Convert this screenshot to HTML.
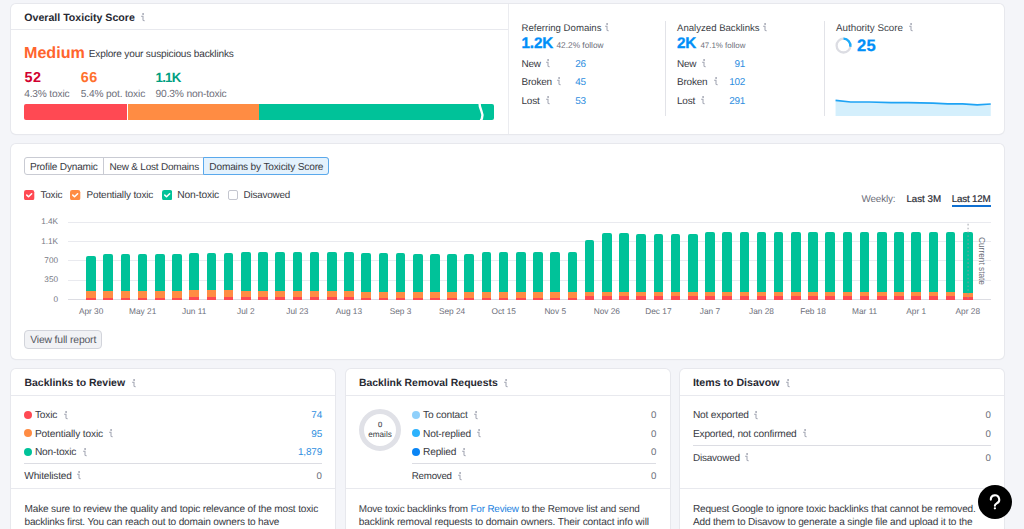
<!DOCTYPE html>
<html><head><meta charset="utf-8"><style>
html,body{margin:0;padding:0;}
body{width:1024px;height:529px;overflow:hidden;background:#f4f5f9;position:relative;font-family:"Liberation Sans", sans-serif;}
.t{position:absolute;white-space:pre;font-family:"Liberation Sans", sans-serif;text-rendering:geometricPrecision;}
</style></head><body>
<div style="position:absolute;left:11px;top:4px;width:993px;height:129.6px;background:#fff;border-radius:5px;box-shadow:0 0 0 1px #e7e8ed, 0 1px 1.5px rgba(30,35,60,0.06);"></div>
<div style="position:absolute;left:11.00px;top:29.00px;width:497.00px;height:1.00px;background:#e8e9ee;"></div>
<div style="position:absolute;left:508.00px;top:4.00px;width:1.00px;height:129.60px;background:#ebecf0;"></div>
<div class="t" style="left:24.30px;top:13.01px;font-size:10.6px;line-height:10.6px;font-weight:700;color:#272932;">Overall Toxicity Score</div>
<svg style="position:absolute;left:140.00px;top:12.80px" width="7" height="10" viewBox="0 0 7 10"><circle cx="3.1" cy="1.0" r="0.95" fill="#a3a6b3"/><path d="M1.1 3.3 H3.0 V6.9 Q3.0 7.7 4.7 7.7" stroke="#a3a6b3" stroke-width="1.05" fill="none"/></svg>
<div class="t" style="left:24.00px;top:44.50px;font-size:16.1px;line-height:16.1px;font-weight:700;color:#ff642d;">Medium</div>
<div class="t" style="left:88.80px;top:50.31px;font-size:10.09px;line-height:9.7px;font-weight:400;color:#383a43;letter-spacing:-0.177px;">Explore your suspicious backlinks</div>
<div class="t" style="left:24.50px;top:70.51px;font-size:14.4px;line-height:14.4px;font-weight:700;color:#d1002f;letter-spacing:0.4px;">52</div>
<div class="t" style="left:80.80px;top:70.51px;font-size:14.4px;line-height:14.4px;font-weight:700;color:#ff6f2c;letter-spacing:0.4px;">66</div>
<div class="t" style="left:155.60px;top:70.51px;font-size:13.3px;line-height:13.3px;font-weight:700;color:#009f81;letter-spacing:-0.8px;">1.1K</div>
<div class="t" style="left:24.20px;top:89.80px;font-size:10.19px;line-height:9.8px;font-weight:400;color:#6c6e79;letter-spacing:-0.173px;">4.3% toxic</div>
<div class="t" style="left:80.80px;top:89.80px;font-size:10.19px;line-height:9.8px;font-weight:400;color:#6c6e79;letter-spacing:-0.164px;">5.4% pot. toxic</div>
<div class="t" style="left:155.60px;top:89.81px;font-size:10.3px;line-height:9.9px;font-weight:400;color:#6c6e79;letter-spacing:-0.201px;">90.3% non-toxic</div>
<div style="position:absolute;left:24.00px;top:103.50px;width:103.30px;height:16.70px;background:#ff4953;border-radius:2px 0 0 2px;"></div>
<div style="position:absolute;left:128.10px;top:103.50px;width:130.70px;height:16.70px;background:#ff8c43;"></div>
<div style="position:absolute;left:259.30px;top:103.50px;width:234.50px;height:16.70px;background:#00c299;border-radius:0 2px 2px 0;"></div>
<svg style="position:absolute;left:472px;top:99px" width="16" height="26" viewBox="0 0 16 26"><path d="M7.3 1.8 C7.4 6 7.9 9 9.4 12 C10.6 14.5 10.8 17 9.9 19.5 C9.2 21.2 8.3 22.6 7.2 23.8" stroke="#fff" stroke-width="2.4" fill="none"/></svg>
<div class="t" style="left:521.50px;top:23.80px;font-size:9.6px;line-height:9.6px;font-weight:400;color:#3d3f48;">Referring Domains</div>
<svg style="position:absolute;left:603.50px;top:22.80px" width="7" height="10" viewBox="0 0 7 10"><circle cx="3.1" cy="1.0" r="0.95" fill="#a3a6b3"/><path d="M1.1 3.3 H3.0 V6.9 Q3.0 7.7 4.7 7.7" stroke="#a3a6b3" stroke-width="1.05" fill="none"/></svg>
<div class="t" style="left:521.50px;top:36.00px;font-size:15.2px;line-height:15.2px;font-weight:700;color:#008ff8;letter-spacing:-0.1px;-webkit-text-stroke:0.35px #008ff8;">1.2K</div>
<div class="t" style="left:556.50px;top:40.81px;font-size:8.3px;line-height:8.3px;font-weight:400;color:#6c6e79;">42.2% follow</div>
<div class="t" style="left:521.50px;top:60.01px;font-size:9.98px;line-height:9.6px;font-weight:400;color:#383a43;letter-spacing:-0.250px;">New</div>
<svg style="position:absolute;left:544.50px;top:59.00px" width="7" height="10" viewBox="0 0 7 10"><circle cx="3.1" cy="1.0" r="0.95" fill="#a3a6b3"/><path d="M1.1 3.3 H3.0 V6.9 Q3.0 7.7 4.7 7.7" stroke="#a3a6b3" stroke-width="1.05" fill="none"/></svg>
<div class="t" style="right:438.20px;top:60.01px;font-size:9.98px;line-height:9.6px;font-weight:400;color:#2d8ee0;letter-spacing:-0.211px;">26</div>
<div class="t" style="left:521.50px;top:78.40px;font-size:9.98px;line-height:9.6px;font-weight:400;color:#383a43;letter-spacing:-0.198px;">Broken</div>
<svg style="position:absolute;left:556.00px;top:77.40px" width="7" height="10" viewBox="0 0 7 10"><circle cx="3.1" cy="1.0" r="0.95" fill="#a3a6b3"/><path d="M1.1 3.3 H3.0 V6.9 Q3.0 7.7 4.7 7.7" stroke="#a3a6b3" stroke-width="1.05" fill="none"/></svg>
<div class="t" style="right:438.20px;top:78.40px;font-size:9.98px;line-height:9.6px;font-weight:400;color:#2d8ee0;letter-spacing:-0.211px;">45</div>
<div class="t" style="left:521.50px;top:96.71px;font-size:9.98px;line-height:9.6px;font-weight:400;color:#383a43;letter-spacing:-0.176px;">Lost</div>
<svg style="position:absolute;left:544.50px;top:95.70px" width="7" height="10" viewBox="0 0 7 10"><circle cx="3.1" cy="1.0" r="0.95" fill="#a3a6b3"/><path d="M1.1 3.3 H3.0 V6.9 Q3.0 7.7 4.7 7.7" stroke="#a3a6b3" stroke-width="1.05" fill="none"/></svg>
<div class="t" style="right:438.20px;top:96.71px;font-size:9.98px;line-height:9.6px;font-weight:400;color:#2d8ee0;letter-spacing:-0.211px;">53</div>
<div class="t" style="left:677.00px;top:23.80px;font-size:9.6px;line-height:9.6px;font-weight:400;color:#3d3f48;">Analyzed Backlinks</div>
<svg style="position:absolute;left:762.00px;top:22.80px" width="7" height="10" viewBox="0 0 7 10"><circle cx="3.1" cy="1.0" r="0.95" fill="#a3a6b3"/><path d="M1.1 3.3 H3.0 V6.9 Q3.0 7.7 4.7 7.7" stroke="#a3a6b3" stroke-width="1.05" fill="none"/></svg>
<div class="t" style="left:677.00px;top:36.00px;font-size:15.2px;line-height:15.2px;font-weight:700;color:#008ff8;letter-spacing:-0.1px;-webkit-text-stroke:0.35px #008ff8;">2K</div>
<div class="t" style="left:700.40px;top:41.81px;font-size:7.95px;line-height:7.95px;font-weight:400;color:#6c6e79;">47.1% follow</div>
<div class="t" style="left:677.00px;top:60.01px;font-size:9.98px;line-height:9.6px;font-weight:400;color:#383a43;letter-spacing:-0.250px;">New</div>
<svg style="position:absolute;left:701.00px;top:59.00px" width="7" height="10" viewBox="0 0 7 10"><circle cx="3.1" cy="1.0" r="0.95" fill="#a3a6b3"/><path d="M1.1 3.3 H3.0 V6.9 Q3.0 7.7 4.7 7.7" stroke="#a3a6b3" stroke-width="1.05" fill="none"/></svg>
<div class="t" style="right:278.80px;top:60.01px;font-size:9.98px;line-height:9.6px;font-weight:400;color:#2d8ee0;letter-spacing:-0.211px;">91</div>
<div class="t" style="left:677.00px;top:78.40px;font-size:9.98px;line-height:9.6px;font-weight:400;color:#383a43;letter-spacing:-0.198px;">Broken</div>
<svg style="position:absolute;left:712.50px;top:77.40px" width="7" height="10" viewBox="0 0 7 10"><circle cx="3.1" cy="1.0" r="0.95" fill="#a3a6b3"/><path d="M1.1 3.3 H3.0 V6.9 Q3.0 7.7 4.7 7.7" stroke="#a3a6b3" stroke-width="1.05" fill="none"/></svg>
<div class="t" style="right:278.80px;top:78.40px;font-size:9.98px;line-height:9.6px;font-weight:400;color:#2d8ee0;letter-spacing:-0.208px;">102</div>
<div class="t" style="left:677.00px;top:96.71px;font-size:9.98px;line-height:9.6px;font-weight:400;color:#383a43;letter-spacing:-0.176px;">Lost</div>
<svg style="position:absolute;left:700.00px;top:95.70px" width="7" height="10" viewBox="0 0 7 10"><circle cx="3.1" cy="1.0" r="0.95" fill="#a3a6b3"/><path d="M1.1 3.3 H3.0 V6.9 Q3.0 7.7 4.7 7.7" stroke="#a3a6b3" stroke-width="1.05" fill="none"/></svg>
<div class="t" style="right:278.80px;top:96.71px;font-size:9.98px;line-height:9.6px;font-weight:400;color:#2d8ee0;letter-spacing:-0.208px;">291</div>
<div style="position:absolute;left:665.30px;top:21.00px;width:1.00px;height:95.00px;background:#e2e3e8;"></div>
<div style="position:absolute;left:824.00px;top:21.00px;width:1.00px;height:95.00px;background:#e2e3e8;"></div>
<div class="t" style="left:836.00px;top:23.80px;font-size:9.8px;line-height:9.8px;font-weight:400;color:#3d3f48;">Authority Score</div>
<svg style="position:absolute;left:908.00px;top:22.80px" width="7" height="10" viewBox="0 0 7 10"><circle cx="3.1" cy="1.0" r="0.95" fill="#a3a6b3"/><path d="M1.1 3.3 H3.0 V6.9 Q3.0 7.7 4.7 7.7" stroke="#a3a6b3" stroke-width="1.05" fill="none"/></svg>
<svg style="position:absolute;left:834px;top:36px" width="20" height="20" viewBox="0 0 20 20"><circle cx="9.5" cy="9.6" r="6.9" stroke="#dcdde3" stroke-width="2.3" fill="none"/><path d="M9.5 2.7 A6.9 6.9 0 0 1 16.3 10.8" stroke="#1cabfb" stroke-width="2.3" fill="none"/></svg>
<div class="t" style="left:857.00px;top:37.51px;font-size:16.5px;line-height:16.5px;font-weight:700;color:#008ff8;letter-spacing:0.35px;-webkit-text-stroke:0.3px #008ff8;">25</div>
<svg style="position:absolute;left:835px;top:98px" width="156" height="18.2" viewBox="0 0 156 18.2"><path d="M0.5 2.4 L15.7 4.0 L34.2 4.0 L56.3 4.7 L73.5 4.7 L98 5.2 L112.8 5.9 L127.5 5.9 L142.3 6.9 L155.8 6.0 L155.8 18.2 L0.5 18.2 Z" fill="#d4effc"/><path d="M0.5 2.4 L15.7 4.0 L34.2 4.0 L56.3 4.7 L73.5 4.7 L98 5.2 L112.8 5.9 L127.5 5.9 L142.3 6.9 L155.8 6.0" stroke="#1ea3f4" stroke-width="1.7" fill="none" stroke-linejoin="round"/></svg>
<div style="position:absolute;left:11px;top:143.8px;width:993px;height:215.39999999999998px;background:#fff;border-radius:5px;box-shadow:0 0 0 1px #e7e8ed, 0 1px 1.5px rgba(30,35,60,0.06);"></div>
<div style="position:absolute;left:24.4px;top:157.3px;width:304.4px;height:17.5px;box-sizing:border-box;border:1px solid #c9cbd3;border-radius:3px;background:#fff"></div>
<div style="position:absolute;left:103.20px;top:157.30px;width:1.00px;height:17.50px;background:#c9cbd3;"></div>
<div style="position:absolute;left:203.2px;top:157.3px;width:125.6px;height:17.5px;box-sizing:border-box;border:1px solid #5aa9ec;border-radius:0 3px 3px 0;background:#e4f2fd"></div>
<div class="t" style="left:29.90px;top:162.81px;font-size:10.09px;line-height:9.7px;font-weight:400;color:#383a43;letter-spacing:-0.182px;">Profile Dynamic</div>
<div class="t" style="left:109.40px;top:162.80px;font-size:9.98px;line-height:9.6px;font-weight:400;color:#383a43;letter-spacing:-0.194px;">New &amp; Lost Domains</div>
<div class="t" style="left:209.30px;top:162.81px;font-size:10.13px;line-height:9.74px;font-weight:400;color:#383a43;letter-spacing:-0.182px;">Domains by Toxicity Score</div>
<svg style="position:absolute;left:24.40px;top:189.6px" width="10.3" height="10.3" viewBox="0 0 10 10"><rect x="0" y="0" width="10" height="10" rx="2.2" fill="#ff4953"/><path d="M2.7 5.0 L4.4 6.6 L7.4 3.6" stroke="#fff" stroke-width="1.5" fill="none" stroke-linecap="round" stroke-linejoin="round"/></svg>
<div class="t" style="left:40.40px;top:190.90px;font-size:9.98px;line-height:9.6px;font-weight:400;color:#383a43;letter-spacing:-0.172px;">Toxic</div>
<svg style="position:absolute;left:70.30px;top:189.6px" width="10.3" height="10.3" viewBox="0 0 10 10"><rect x="0" y="0" width="10" height="10" rx="2.2" fill="#ff8c43"/><path d="M2.7 5.0 L4.4 6.6 L7.4 3.6" stroke="#fff" stroke-width="1.5" fill="none" stroke-linecap="round" stroke-linejoin="round"/></svg>
<div class="t" style="left:86.50px;top:190.90px;font-size:9.98px;line-height:9.6px;font-weight:400;color:#383a43;letter-spacing:-0.153px;">Potentially toxic</div>
<svg style="position:absolute;left:161.70px;top:189.6px" width="10.3" height="10.3" viewBox="0 0 10 10"><rect x="0" y="0" width="10" height="10" rx="2.2" fill="#00c299"/><path d="M2.7 5.0 L4.4 6.6 L7.4 3.6" stroke="#fff" stroke-width="1.5" fill="none" stroke-linecap="round" stroke-linejoin="round"/></svg>
<div class="t" style="left:177.30px;top:190.91px;font-size:10.3px;line-height:9.9px;font-weight:400;color:#383a43;letter-spacing:-0.198px;">Non-toxic</div>
<div style="position:absolute;left:227.50px;top:189.6px;width:10.2px;height:10.2px;box-sizing:border-box;border:1px solid #c4c6cf;border-radius:2px;background:#fff"></div>
<div class="t" style="left:243.50px;top:190.91px;font-size:9.88px;line-height:9.5px;font-weight:400;color:#383a43;letter-spacing:-0.205px;">Disavowed</div>
<div class="t" style="left:861.60px;top:194.60px;font-size:9.88px;line-height:9.5px;font-weight:400;color:#6c6e79;letter-spacing:-0.190px;">Weekly:</div>
<div class="t" style="left:906.40px;top:194.61px;font-size:9.75px;line-height:9.75px;font-weight:400;color:#2a2c35;-webkit-text-stroke:0.2px #2a2c35;letter-spacing:0px;">Last 3M</div>
<div class="t" style="left:951.70px;top:194.61px;font-size:9.75px;line-height:9.75px;font-weight:400;color:#2a2c35;-webkit-text-stroke:0.2px #2a2c35;letter-spacing:-0.15px;">Last 12M</div>
<div style="position:absolute;left:951.70px;top:205.00px;width:38.90px;height:2.00px;background:#0f6fd1;"></div>
<div style="position:absolute;left:68.40px;top:221.50px;width:922.40px;height:1.00px;background:#e9eaef;"></div>
<div class="t" style="right:966.00px;top:218.31px;font-size:8.2px;line-height:8.2px;font-weight:400;color:#767883;">1.4K</div>
<div style="position:absolute;left:68.40px;top:240.90px;width:922.40px;height:1.00px;background:#e9eaef;"></div>
<div class="t" style="right:966.00px;top:237.71px;font-size:8.2px;line-height:8.2px;font-weight:400;color:#767883;">1.1K</div>
<div style="position:absolute;left:68.40px;top:260.20px;width:922.40px;height:1.00px;background:#e9eaef;"></div>
<div class="t" style="right:966.00px;top:257.01px;font-size:8.2px;line-height:8.2px;font-weight:400;color:#767883;">700</div>
<div style="position:absolute;left:68.40px;top:279.60px;width:922.40px;height:1.00px;background:#e9eaef;"></div>
<div class="t" style="right:966.00px;top:276.40px;font-size:8.2px;line-height:8.2px;font-weight:400;color:#767883;">350</div>
<div style="position:absolute;left:68.40px;top:299.00px;width:922.40px;height:1.00px;background:#dcdde3;"></div>
<div class="t" style="right:966.00px;top:295.81px;font-size:8.2px;line-height:8.2px;font-weight:400;color:#767883;">0</div>
<div style="position:absolute;left:86.30px;top:256.10px;width:9.6px;height:43.70px;border-radius:2px 2px 0 0;overflow:hidden;background:#00c299"><div style="position:absolute;left:0;right:0;top:35.20px;bottom:0;background:#ff8c43"></div><div style="position:absolute;left:0;right:0;top:41.50px;bottom:0;background:#ff4953"></div></div>
<div style="position:absolute;left:103.49px;top:253.70px;width:9.6px;height:46.10px;border-radius:2px 2px 0 0;overflow:hidden;background:#00c299"><div style="position:absolute;left:0;right:0;top:37.60px;bottom:0;background:#ff8c43"></div><div style="position:absolute;left:0;right:0;top:43.90px;bottom:0;background:#ff4953"></div></div>
<div style="position:absolute;left:120.68px;top:253.70px;width:9.6px;height:46.10px;border-radius:2px 2px 0 0;overflow:hidden;background:#00c299"><div style="position:absolute;left:0;right:0;top:37.60px;bottom:0;background:#ff8c43"></div><div style="position:absolute;left:0;right:0;top:43.90px;bottom:0;background:#ff4953"></div></div>
<div style="position:absolute;left:137.87px;top:253.70px;width:9.6px;height:46.10px;border-radius:2px 2px 0 0;overflow:hidden;background:#00c299"><div style="position:absolute;left:0;right:0;top:37.60px;bottom:0;background:#ff8c43"></div><div style="position:absolute;left:0;right:0;top:43.90px;bottom:0;background:#ff4953"></div></div>
<div style="position:absolute;left:155.06px;top:253.70px;width:9.6px;height:46.10px;border-radius:2px 2px 0 0;overflow:hidden;background:#00c299"><div style="position:absolute;left:0;right:0;top:37.60px;bottom:0;background:#ff8c43"></div><div style="position:absolute;left:0;right:0;top:43.90px;bottom:0;background:#ff4953"></div></div>
<div style="position:absolute;left:172.25px;top:253.70px;width:9.6px;height:46.10px;border-radius:2px 2px 0 0;overflow:hidden;background:#00c299"><div style="position:absolute;left:0;right:0;top:37.60px;bottom:0;background:#ff8c43"></div><div style="position:absolute;left:0;right:0;top:43.90px;bottom:0;background:#ff4953"></div></div>
<div style="position:absolute;left:189.44px;top:252.90px;width:9.6px;height:46.90px;border-radius:2px 2px 0 0;overflow:hidden;background:#00c299"><div style="position:absolute;left:0;right:0;top:37.40px;bottom:0;background:#ff8c43"></div><div style="position:absolute;left:0;right:0;top:44.00px;bottom:0;background:#ff4953"></div></div>
<div style="position:absolute;left:206.63px;top:252.90px;width:9.6px;height:46.90px;border-radius:2px 2px 0 0;overflow:hidden;background:#00c299"><div style="position:absolute;left:0;right:0;top:37.40px;bottom:0;background:#ff8c43"></div><div style="position:absolute;left:0;right:0;top:44.00px;bottom:0;background:#ff4953"></div></div>
<div style="position:absolute;left:223.82px;top:253.30px;width:9.6px;height:46.50px;border-radius:2px 2px 0 0;overflow:hidden;background:#00c299"><div style="position:absolute;left:0;right:0;top:37.00px;bottom:0;background:#ff8c43"></div><div style="position:absolute;left:0;right:0;top:43.60px;bottom:0;background:#ff4953"></div></div>
<div style="position:absolute;left:241.01px;top:251.90px;width:9.6px;height:47.90px;border-radius:2px 2px 0 0;overflow:hidden;background:#00c299"><div style="position:absolute;left:0;right:0;top:39.20px;bottom:0;background:#ff8c43"></div><div style="position:absolute;left:0;right:0;top:45.10px;bottom:0;background:#ff4953"></div></div>
<div style="position:absolute;left:258.20px;top:251.90px;width:9.6px;height:47.90px;border-radius:2px 2px 0 0;overflow:hidden;background:#00c299"><div style="position:absolute;left:0;right:0;top:39.20px;bottom:0;background:#ff8c43"></div><div style="position:absolute;left:0;right:0;top:45.10px;bottom:0;background:#ff4953"></div></div>
<div style="position:absolute;left:275.39px;top:252.10px;width:9.6px;height:47.70px;border-radius:2px 2px 0 0;overflow:hidden;background:#00c299"><div style="position:absolute;left:0;right:0;top:39.00px;bottom:0;background:#ff8c43"></div><div style="position:absolute;left:0;right:0;top:44.90px;bottom:0;background:#ff4953"></div></div>
<div style="position:absolute;left:292.58px;top:252.10px;width:9.6px;height:47.70px;border-radius:2px 2px 0 0;overflow:hidden;background:#00c299"><div style="position:absolute;left:0;right:0;top:39.00px;bottom:0;background:#ff8c43"></div><div style="position:absolute;left:0;right:0;top:44.90px;bottom:0;background:#ff4953"></div></div>
<div style="position:absolute;left:309.77px;top:252.30px;width:9.6px;height:47.50px;border-radius:2px 2px 0 0;overflow:hidden;background:#00c299"><div style="position:absolute;left:0;right:0;top:38.80px;bottom:0;background:#ff8c43"></div><div style="position:absolute;left:0;right:0;top:44.70px;bottom:0;background:#ff4953"></div></div>
<div style="position:absolute;left:326.96px;top:252.30px;width:9.6px;height:47.50px;border-radius:2px 2px 0 0;overflow:hidden;background:#00c299"><div style="position:absolute;left:0;right:0;top:38.80px;bottom:0;background:#ff8c43"></div><div style="position:absolute;left:0;right:0;top:44.70px;bottom:0;background:#ff4953"></div></div>
<div style="position:absolute;left:344.15px;top:252.30px;width:9.6px;height:47.50px;border-radius:2px 2px 0 0;overflow:hidden;background:#00c299"><div style="position:absolute;left:0;right:0;top:38.80px;bottom:0;background:#ff8c43"></div><div style="position:absolute;left:0;right:0;top:44.70px;bottom:0;background:#ff4953"></div></div>
<div style="position:absolute;left:361.34px;top:253.10px;width:9.6px;height:46.70px;border-radius:2px 2px 0 0;overflow:hidden;background:#00c299"><div style="position:absolute;left:0;right:0;top:39.10px;bottom:0;background:#ff8c43"></div><div style="position:absolute;left:0;right:0;top:44.80px;bottom:0;background:#ff4953"></div></div>
<div style="position:absolute;left:378.53px;top:252.50px;width:9.6px;height:47.30px;border-radius:2px 2px 0 0;overflow:hidden;background:#00c299"><div style="position:absolute;left:0;right:0;top:39.70px;bottom:0;background:#ff8c43"></div><div style="position:absolute;left:0;right:0;top:45.40px;bottom:0;background:#ff4953"></div></div>
<div style="position:absolute;left:395.72px;top:252.50px;width:9.6px;height:47.30px;border-radius:2px 2px 0 0;overflow:hidden;background:#00c299"><div style="position:absolute;left:0;right:0;top:39.70px;bottom:0;background:#ff8c43"></div><div style="position:absolute;left:0;right:0;top:45.40px;bottom:0;background:#ff4953"></div></div>
<div style="position:absolute;left:412.91px;top:253.90px;width:9.6px;height:45.90px;border-radius:2px 2px 0 0;overflow:hidden;background:#00c299"><div style="position:absolute;left:0;right:0;top:38.30px;bottom:0;background:#ff8c43"></div><div style="position:absolute;left:0;right:0;top:44.00px;bottom:0;background:#ff4953"></div></div>
<div style="position:absolute;left:430.10px;top:253.90px;width:9.6px;height:45.90px;border-radius:2px 2px 0 0;overflow:hidden;background:#00c299"><div style="position:absolute;left:0;right:0;top:38.30px;bottom:0;background:#ff8c43"></div><div style="position:absolute;left:0;right:0;top:44.00px;bottom:0;background:#ff4953"></div></div>
<div style="position:absolute;left:447.29px;top:253.60px;width:9.6px;height:46.20px;border-radius:2px 2px 0 0;overflow:hidden;background:#00c299"><div style="position:absolute;left:0;right:0;top:38.60px;bottom:0;background:#ff8c43"></div><div style="position:absolute;left:0;right:0;top:44.30px;bottom:0;background:#ff4953"></div></div>
<div style="position:absolute;left:464.48px;top:253.60px;width:9.6px;height:46.20px;border-radius:2px 2px 0 0;overflow:hidden;background:#00c299"><div style="position:absolute;left:0;right:0;top:38.60px;bottom:0;background:#ff8c43"></div><div style="position:absolute;left:0;right:0;top:44.30px;bottom:0;background:#ff4953"></div></div>
<div style="position:absolute;left:481.67px;top:252.30px;width:9.6px;height:47.50px;border-radius:2px 2px 0 0;overflow:hidden;background:#00c299"><div style="position:absolute;left:0;right:0;top:39.90px;bottom:0;background:#ff8c43"></div><div style="position:absolute;left:0;right:0;top:45.60px;bottom:0;background:#ff4953"></div></div>
<div style="position:absolute;left:498.86px;top:252.30px;width:9.6px;height:47.50px;border-radius:2px 2px 0 0;overflow:hidden;background:#00c299"><div style="position:absolute;left:0;right:0;top:39.90px;bottom:0;background:#ff8c43"></div><div style="position:absolute;left:0;right:0;top:45.60px;bottom:0;background:#ff4953"></div></div>
<div style="position:absolute;left:516.05px;top:252.30px;width:9.6px;height:47.50px;border-radius:2px 2px 0 0;overflow:hidden;background:#00c299"><div style="position:absolute;left:0;right:0;top:39.90px;bottom:0;background:#ff8c43"></div><div style="position:absolute;left:0;right:0;top:45.60px;bottom:0;background:#ff4953"></div></div>
<div style="position:absolute;left:533.24px;top:252.30px;width:9.6px;height:47.50px;border-radius:2px 2px 0 0;overflow:hidden;background:#00c299"><div style="position:absolute;left:0;right:0;top:39.90px;bottom:0;background:#ff8c43"></div><div style="position:absolute;left:0;right:0;top:45.60px;bottom:0;background:#ff4953"></div></div>
<div style="position:absolute;left:550.43px;top:252.30px;width:9.6px;height:47.50px;border-radius:2px 2px 0 0;overflow:hidden;background:#00c299"><div style="position:absolute;left:0;right:0;top:39.90px;bottom:0;background:#ff8c43"></div><div style="position:absolute;left:0;right:0;top:45.60px;bottom:0;background:#ff4953"></div></div>
<div style="position:absolute;left:567.62px;top:252.30px;width:9.6px;height:47.50px;border-radius:2px 2px 0 0;overflow:hidden;background:#00c299"><div style="position:absolute;left:0;right:0;top:39.90px;bottom:0;background:#ff8c43"></div><div style="position:absolute;left:0;right:0;top:45.60px;bottom:0;background:#ff4953"></div></div>
<div style="position:absolute;left:584.81px;top:239.80px;width:9.6px;height:60.00px;border-radius:2px 2px 0 0;overflow:hidden;background:#00c299"><div style="position:absolute;left:0;right:0;top:52.40px;bottom:0;background:#ff8c43"></div><div style="position:absolute;left:0;right:0;top:56.50px;bottom:0;background:#ff4953"></div></div>
<div style="position:absolute;left:602.00px;top:233.40px;width:9.6px;height:66.40px;border-radius:2px 2px 0 0;overflow:hidden;background:#00c299"><div style="position:absolute;left:0;right:0;top:58.80px;bottom:0;background:#ff8c43"></div><div style="position:absolute;left:0;right:0;top:62.90px;bottom:0;background:#ff4953"></div></div>
<div style="position:absolute;left:619.19px;top:233.40px;width:9.6px;height:66.40px;border-radius:2px 2px 0 0;overflow:hidden;background:#00c299"><div style="position:absolute;left:0;right:0;top:58.80px;bottom:0;background:#ff8c43"></div><div style="position:absolute;left:0;right:0;top:62.90px;bottom:0;background:#ff4953"></div></div>
<div style="position:absolute;left:636.38px;top:233.80px;width:9.6px;height:66.00px;border-radius:2px 2px 0 0;overflow:hidden;background:#00c299"><div style="position:absolute;left:0;right:0;top:58.40px;bottom:0;background:#ff8c43"></div><div style="position:absolute;left:0;right:0;top:62.50px;bottom:0;background:#ff4953"></div></div>
<div style="position:absolute;left:653.57px;top:233.80px;width:9.6px;height:66.00px;border-radius:2px 2px 0 0;overflow:hidden;background:#00c299"><div style="position:absolute;left:0;right:0;top:58.40px;bottom:0;background:#ff8c43"></div><div style="position:absolute;left:0;right:0;top:62.50px;bottom:0;background:#ff4953"></div></div>
<div style="position:absolute;left:670.76px;top:233.80px;width:9.6px;height:66.00px;border-radius:2px 2px 0 0;overflow:hidden;background:#00c299"><div style="position:absolute;left:0;right:0;top:58.40px;bottom:0;background:#ff8c43"></div><div style="position:absolute;left:0;right:0;top:62.50px;bottom:0;background:#ff4953"></div></div>
<div style="position:absolute;left:687.95px;top:233.80px;width:9.6px;height:66.00px;border-radius:2px 2px 0 0;overflow:hidden;background:#00c299"><div style="position:absolute;left:0;right:0;top:58.40px;bottom:0;background:#ff8c43"></div><div style="position:absolute;left:0;right:0;top:62.50px;bottom:0;background:#ff4953"></div></div>
<div style="position:absolute;left:705.14px;top:232.20px;width:9.6px;height:67.60px;border-radius:2px 2px 0 0;overflow:hidden;background:#00c299"><div style="position:absolute;left:0;right:0;top:60.00px;bottom:0;background:#ff8c43"></div><div style="position:absolute;left:0;right:0;top:64.10px;bottom:0;background:#ff4953"></div></div>
<div style="position:absolute;left:722.33px;top:232.20px;width:9.6px;height:67.60px;border-radius:2px 2px 0 0;overflow:hidden;background:#00c299"><div style="position:absolute;left:0;right:0;top:60.00px;bottom:0;background:#ff8c43"></div><div style="position:absolute;left:0;right:0;top:64.10px;bottom:0;background:#ff4953"></div></div>
<div style="position:absolute;left:739.52px;top:232.20px;width:9.6px;height:67.60px;border-radius:2px 2px 0 0;overflow:hidden;background:#00c299"><div style="position:absolute;left:0;right:0;top:60.00px;bottom:0;background:#ff8c43"></div><div style="position:absolute;left:0;right:0;top:64.10px;bottom:0;background:#ff4953"></div></div>
<div style="position:absolute;left:756.71px;top:232.20px;width:9.6px;height:67.60px;border-radius:2px 2px 0 0;overflow:hidden;background:#00c299"><div style="position:absolute;left:0;right:0;top:60.00px;bottom:0;background:#ff8c43"></div><div style="position:absolute;left:0;right:0;top:64.10px;bottom:0;background:#ff4953"></div></div>
<div style="position:absolute;left:773.90px;top:232.20px;width:9.6px;height:67.60px;border-radius:2px 2px 0 0;overflow:hidden;background:#00c299"><div style="position:absolute;left:0;right:0;top:60.00px;bottom:0;background:#ff8c43"></div><div style="position:absolute;left:0;right:0;top:64.10px;bottom:0;background:#ff4953"></div></div>
<div style="position:absolute;left:791.09px;top:232.20px;width:9.6px;height:67.60px;border-radius:2px 2px 0 0;overflow:hidden;background:#00c299"><div style="position:absolute;left:0;right:0;top:60.00px;bottom:0;background:#ff8c43"></div><div style="position:absolute;left:0;right:0;top:64.10px;bottom:0;background:#ff4953"></div></div>
<div style="position:absolute;left:808.28px;top:232.20px;width:9.6px;height:67.60px;border-radius:2px 2px 0 0;overflow:hidden;background:#00c299"><div style="position:absolute;left:0;right:0;top:60.00px;bottom:0;background:#ff8c43"></div><div style="position:absolute;left:0;right:0;top:64.10px;bottom:0;background:#ff4953"></div></div>
<div style="position:absolute;left:825.47px;top:232.20px;width:9.6px;height:67.60px;border-radius:2px 2px 0 0;overflow:hidden;background:#00c299"><div style="position:absolute;left:0;right:0;top:60.00px;bottom:0;background:#ff8c43"></div><div style="position:absolute;left:0;right:0;top:64.10px;bottom:0;background:#ff4953"></div></div>
<div style="position:absolute;left:842.66px;top:232.20px;width:9.6px;height:67.60px;border-radius:2px 2px 0 0;overflow:hidden;background:#00c299"><div style="position:absolute;left:0;right:0;top:60.00px;bottom:0;background:#ff8c43"></div><div style="position:absolute;left:0;right:0;top:64.10px;bottom:0;background:#ff4953"></div></div>
<div style="position:absolute;left:859.85px;top:232.20px;width:9.6px;height:67.60px;border-radius:2px 2px 0 0;overflow:hidden;background:#00c299"><div style="position:absolute;left:0;right:0;top:60.00px;bottom:0;background:#ff8c43"></div><div style="position:absolute;left:0;right:0;top:64.10px;bottom:0;background:#ff4953"></div></div>
<div style="position:absolute;left:877.04px;top:232.20px;width:9.6px;height:67.60px;border-radius:2px 2px 0 0;overflow:hidden;background:#00c299"><div style="position:absolute;left:0;right:0;top:60.00px;bottom:0;background:#ff8c43"></div><div style="position:absolute;left:0;right:0;top:64.10px;bottom:0;background:#ff4953"></div></div>
<div style="position:absolute;left:894.23px;top:232.20px;width:9.6px;height:67.60px;border-radius:2px 2px 0 0;overflow:hidden;background:#00c299"><div style="position:absolute;left:0;right:0;top:60.00px;bottom:0;background:#ff8c43"></div><div style="position:absolute;left:0;right:0;top:64.10px;bottom:0;background:#ff4953"></div></div>
<div style="position:absolute;left:911.42px;top:232.20px;width:9.6px;height:67.60px;border-radius:2px 2px 0 0;overflow:hidden;background:#00c299"><div style="position:absolute;left:0;right:0;top:60.00px;bottom:0;background:#ff8c43"></div><div style="position:absolute;left:0;right:0;top:64.10px;bottom:0;background:#ff4953"></div></div>
<div style="position:absolute;left:928.61px;top:232.20px;width:9.6px;height:67.60px;border-radius:2px 2px 0 0;overflow:hidden;background:#00c299"><div style="position:absolute;left:0;right:0;top:60.00px;bottom:0;background:#ff8c43"></div><div style="position:absolute;left:0;right:0;top:64.10px;bottom:0;background:#ff4953"></div></div>
<div style="position:absolute;left:945.80px;top:232.30px;width:9.6px;height:67.50px;border-radius:2px 2px 0 0;overflow:hidden;background:#00c299"><div style="position:absolute;left:0;right:0;top:59.90px;bottom:0;background:#ff8c43"></div><div style="position:absolute;left:0;right:0;top:64.00px;bottom:0;background:#ff4953"></div></div>
<div style="position:absolute;left:962.99px;top:232.20px;width:9.6px;height:67.60px;border-radius:2px 2px 0 0;overflow:hidden;background:#00c299"><div style="position:absolute;left:0;right:0;top:61.00px;bottom:0;background:#ff8c43"></div><div style="position:absolute;left:0;right:0;top:64.60px;bottom:0;background:#ff4953"></div></div>
<svg style="position:absolute;left:964px;top:223px" width="8" height="78" viewBox="0 0 8 78"><line x1="4.1" y1="0.8" x2="4.1" y2="77" stroke="rgba(150,153,163,0.65)" stroke-width="1.4" stroke-dasharray="1.6 2.25"/></svg>
<div style="position:absolute;white-space:pre;left:951.50px;top:256.00px;width:60px;text-align:center;font-size:8.3px;line-height:10px;color:#6c6e79;transform:rotate(90deg);transform-origin:30px 5px">Current state</div>
<div class="t" style="left:-108.90px;width:400px;text-align:center;top:307.30px;font-size:8.3px;line-height:8.3px;font-weight:400;color:#6c6e79;">Apr 30</div>
<div class="t" style="left:-57.33px;width:400px;text-align:center;top:307.30px;font-size:8.3px;line-height:8.3px;font-weight:400;color:#6c6e79;">May 21</div>
<div class="t" style="left:-5.76px;width:400px;text-align:center;top:307.30px;font-size:8.3px;line-height:8.3px;font-weight:400;color:#6c6e79;">Jun 11</div>
<div class="t" style="left:45.81px;width:400px;text-align:center;top:307.30px;font-size:8.3px;line-height:8.3px;font-weight:400;color:#6c6e79;">Jul 2</div>
<div class="t" style="left:97.38px;width:400px;text-align:center;top:307.30px;font-size:8.3px;line-height:8.3px;font-weight:400;color:#6c6e79;">Jul 23</div>
<div class="t" style="left:148.95px;width:400px;text-align:center;top:307.30px;font-size:8.3px;line-height:8.3px;font-weight:400;color:#6c6e79;">Aug 13</div>
<div class="t" style="left:200.52px;width:400px;text-align:center;top:307.30px;font-size:8.3px;line-height:8.3px;font-weight:400;color:#6c6e79;">Sep 3</div>
<div class="t" style="left:252.09px;width:400px;text-align:center;top:307.30px;font-size:8.3px;line-height:8.3px;font-weight:400;color:#6c6e79;">Sep 24</div>
<div class="t" style="left:303.66px;width:400px;text-align:center;top:307.30px;font-size:8.3px;line-height:8.3px;font-weight:400;color:#6c6e79;">Oct 15</div>
<div class="t" style="left:355.23px;width:400px;text-align:center;top:307.30px;font-size:8.3px;line-height:8.3px;font-weight:400;color:#6c6e79;">Nov 5</div>
<div class="t" style="left:406.80px;width:400px;text-align:center;top:307.30px;font-size:8.3px;line-height:8.3px;font-weight:400;color:#6c6e79;">Nov 26</div>
<div class="t" style="left:458.37px;width:400px;text-align:center;top:307.30px;font-size:8.3px;line-height:8.3px;font-weight:400;color:#6c6e79;">Dec 17</div>
<div class="t" style="left:509.94px;width:400px;text-align:center;top:307.30px;font-size:8.3px;line-height:8.3px;font-weight:400;color:#6c6e79;">Jan 7</div>
<div class="t" style="left:561.51px;width:400px;text-align:center;top:307.30px;font-size:8.3px;line-height:8.3px;font-weight:400;color:#6c6e79;">Jan 28</div>
<div class="t" style="left:613.08px;width:400px;text-align:center;top:307.30px;font-size:8.3px;line-height:8.3px;font-weight:400;color:#6c6e79;">Feb 18</div>
<div class="t" style="left:664.65px;width:400px;text-align:center;top:307.30px;font-size:8.3px;line-height:8.3px;font-weight:400;color:#6c6e79;">Mar 11</div>
<div class="t" style="left:716.22px;width:400px;text-align:center;top:307.30px;font-size:8.3px;line-height:8.3px;font-weight:400;color:#6c6e79;">Apr 1</div>
<div class="t" style="left:767.79px;width:400px;text-align:center;top:307.30px;font-size:8.3px;line-height:8.3px;font-weight:400;color:#6c6e79;">Apr 28</div>
<div style="position:absolute;left:24.3px;top:330.3px;width:77.9px;height:18.3px;box-sizing:border-box;border:1px solid #d2d4db;border-radius:4px;background:#f1f2f5"></div>
<div class="t" style="left:30.20px;top:335.60px;font-size:10.4px;line-height:10px;font-weight:400;color:#54565f;letter-spacing:-0.161px;">View full report</div>
<div style="position:absolute;left:11px;top:368.6px;width:324px;height:200px;background:#fff;border-radius:5px;box-shadow:0 0 0 1px #e7e8ed, 0 1px 1.5px rgba(30,35,60,0.06);"></div>
<div style="position:absolute;left:11.00px;top:395.00px;width:324.00px;height:1.00px;background:#e8e9ee;"></div>
<div style="position:absolute;left:11.00px;top:488.30px;width:324.00px;height:1.00px;background:#e8e9ee;"></div>
<div style="position:absolute;left:346px;top:368.6px;width:323.5px;height:200px;background:#fff;border-radius:5px;box-shadow:0 0 0 1px #e7e8ed, 0 1px 1.5px rgba(30,35,60,0.06);"></div>
<div style="position:absolute;left:346.00px;top:395.00px;width:323.50px;height:1.00px;background:#e8e9ee;"></div>
<div style="position:absolute;left:346.00px;top:488.30px;width:323.50px;height:1.00px;background:#e8e9ee;"></div>
<div style="position:absolute;left:680px;top:368.6px;width:324px;height:200px;background:#fff;border-radius:5px;box-shadow:0 0 0 1px #e7e8ed, 0 1px 1.5px rgba(30,35,60,0.06);"></div>
<div style="position:absolute;left:680.00px;top:395.00px;width:324.00px;height:1.00px;background:#e8e9ee;"></div>
<div style="position:absolute;left:680.00px;top:488.30px;width:324.00px;height:1.00px;background:#e8e9ee;"></div>
<div class="t" style="left:24.50px;top:379.31px;font-size:10.46px;line-height:10.46px;font-weight:700;color:#272932;">Backlinks to Review</div>
<svg style="position:absolute;left:130.50px;top:378.60px" width="7" height="10" viewBox="0 0 7 10"><circle cx="3.1" cy="1.0" r="0.95" fill="#a3a6b3"/><path d="M1.1 3.3 H3.0 V6.9 Q3.0 7.7 4.7 7.7" stroke="#a3a6b3" stroke-width="1.05" fill="none"/></svg>
<div class="t" style="left:358.90px;top:379.31px;font-size:10.42px;line-height:10.42px;font-weight:700;color:#272932;">Backlink Removal Requests</div>
<svg style="position:absolute;left:503.00px;top:378.60px" width="7" height="10" viewBox="0 0 7 10"><circle cx="3.1" cy="1.0" r="0.95" fill="#a3a6b3"/><path d="M1.1 3.3 H3.0 V6.9 Q3.0 7.7 4.7 7.7" stroke="#a3a6b3" stroke-width="1.05" fill="none"/></svg>
<div class="t" style="left:692.90px;top:378.31px;font-size:10.6px;line-height:10.6px;font-weight:700;color:#272932;">Items to Disavow</div>
<svg style="position:absolute;left:785.00px;top:378.60px" width="7" height="10" viewBox="0 0 7 10"><circle cx="3.1" cy="1.0" r="0.95" fill="#a3a6b3"/><path d="M1.1 3.3 H3.0 V6.9 Q3.0 7.7 4.7 7.7" stroke="#a3a6b3" stroke-width="1.05" fill="none"/></svg>
<div style="position:absolute;left:23.90px;top:411.30px;width:8px;height:8px;border-radius:50%;background:#ff4953"></div>
<div class="t" style="left:34.90px;top:411.40px;font-size:10.19px;line-height:9.8px;font-weight:400;color:#383a43;letter-spacing:-0.172px;">Toxic</div>
<svg style="position:absolute;left:62.50px;top:411.30px" width="7" height="10" viewBox="0 0 7 10"><circle cx="3.1" cy="1.0" r="0.95" fill="#a3a6b3"/><path d="M1.1 3.3 H3.0 V6.9 Q3.0 7.7 4.7 7.7" stroke="#a3a6b3" stroke-width="1.05" fill="none"/></svg>
<div class="t" style="right:702.00px;top:411.40px;font-size:9.98px;line-height:9.6px;font-weight:400;color:#2d8ee0;letter-spacing:-0.211px;">74</div>
<div style="position:absolute;left:23.90px;top:429.40px;width:8px;height:8px;border-radius:50%;background:#ff8c43"></div>
<div class="t" style="left:34.90px;top:429.80px;font-size:10.19px;line-height:9.8px;font-weight:400;color:#383a43;letter-spacing:-0.153px;">Potentially toxic</div>
<svg style="position:absolute;left:107.50px;top:429.40px" width="7" height="10" viewBox="0 0 7 10"><circle cx="3.1" cy="1.0" r="0.95" fill="#a3a6b3"/><path d="M1.1 3.3 H3.0 V6.9 Q3.0 7.7 4.7 7.7" stroke="#a3a6b3" stroke-width="1.05" fill="none"/></svg>
<div class="t" style="right:702.00px;top:429.82px;font-size:9.98px;line-height:9.6px;font-weight:400;color:#2d8ee0;letter-spacing:-0.211px;">95</div>
<div style="position:absolute;left:23.90px;top:447.60px;width:8px;height:8px;border-radius:50%;background:#00c299"></div>
<div class="t" style="left:34.90px;top:447.61px;font-size:10.19px;line-height:9.8px;font-weight:400;color:#383a43;letter-spacing:-0.175px;">Non-toxic</div>
<svg style="position:absolute;left:81.50px;top:447.60px" width="7" height="10" viewBox="0 0 7 10"><circle cx="3.1" cy="1.0" r="0.95" fill="#a3a6b3"/><path d="M1.1 3.3 H3.0 V6.9 Q3.0 7.7 4.7 7.7" stroke="#a3a6b3" stroke-width="1.05" fill="none"/></svg>
<div class="t" style="right:702.00px;top:447.61px;font-size:9.98px;line-height:9.6px;font-weight:400;color:#2d8ee0;letter-spacing:-0.188px;">1,879</div>
<div style="position:absolute;left:24.00px;top:462.50px;width:298.00px;height:1.00px;background:#dcdde3;"></div>
<div class="t" style="left:24.30px;top:471.81px;font-size:10.09px;line-height:9.7px;font-weight:400;color:#383a43;letter-spacing:-0.173px;">Whitelisted</div>
<svg style="position:absolute;left:76.00px;top:471.00px" width="7" height="10" viewBox="0 0 7 10"><circle cx="3.1" cy="1.0" r="0.95" fill="#a3a6b3"/><path d="M1.1 3.3 H3.0 V6.9 Q3.0 7.7 4.7 7.7" stroke="#a3a6b3" stroke-width="1.05" fill="none"/></svg>
<div class="t" style="right:702.00px;top:471.81px;font-size:9.7px;line-height:9.7px;font-weight:400;color:#6c6e79;">0</div>
<div class="t" style="left:24.50px;top:504.91px;font-size:10.09px;line-height:9.7px;font-weight:400;color:#383a43;letter-spacing:-0.171px;">Make sure to review the quality and topic relevance of the most toxic</div>
<div class="t" style="left:24.50px;top:517.81px;font-size:10.09px;line-height:9.7px;font-weight:400;color:#383a43;letter-spacing:-0.174px;">backlinks first. You can reach out to domain owners to have</div>
<svg style="position:absolute;left:355px;top:405px" width="50" height="50" viewBox="0 0 50 50"><circle cx="25" cy="25" r="18.5" stroke="#e0e1e7" stroke-width="5" fill="none"/></svg>
<div class="t" style="left:180.00px;width:400px;text-align:center;top:420.61px;font-size:7.6px;line-height:7.6px;font-weight:400;color:#3a3c45;-webkit-text-stroke:0.1px #3a3c45;">0</div>
<div class="t" style="left:180.00px;width:400px;text-align:center;top:430.90px;font-size:8.2px;line-height:8.2px;font-weight:400;color:#3a3c45;">emails</div>
<div style="position:absolute;left:411.80px;top:411.30px;width:8px;height:8px;border-radius:50%;background:#8fd0fb"></div>
<div class="t" style="left:423.00px;top:411.40px;font-size:10.19px;line-height:9.8px;font-weight:400;color:#383a43;letter-spacing:-0.172px;">To contact</div>
<svg style="position:absolute;left:473.00px;top:411.30px" width="7" height="10" viewBox="0 0 7 10"><circle cx="3.1" cy="1.0" r="0.95" fill="#a3a6b3"/><path d="M1.1 3.3 H3.0 V6.9 Q3.0 7.7 4.7 7.7" stroke="#a3a6b3" stroke-width="1.05" fill="none"/></svg>
<div class="t" style="right:367.50px;top:411.41px;font-size:9.7px;line-height:9.7px;font-weight:400;color:#6c6e79;">0</div>
<div style="position:absolute;left:411.80px;top:429.40px;width:8px;height:8px;border-radius:50%;background:#2cb2fd"></div>
<div class="t" style="left:423.00px;top:429.80px;font-size:10.19px;line-height:9.8px;font-weight:400;color:#383a43;letter-spacing:-0.168px;">Not-replied</div>
<svg style="position:absolute;left:476.00px;top:429.40px" width="7" height="10" viewBox="0 0 7 10"><circle cx="3.1" cy="1.0" r="0.95" fill="#a3a6b3"/><path d="M1.1 3.3 H3.0 V6.9 Q3.0 7.7 4.7 7.7" stroke="#a3a6b3" stroke-width="1.05" fill="none"/></svg>
<div class="t" style="right:367.50px;top:429.81px;font-size:9.7px;line-height:9.7px;font-weight:400;color:#6c6e79;">0</div>
<div style="position:absolute;left:411.80px;top:447.60px;width:8px;height:8px;border-radius:50%;background:#0a85f5"></div>
<div class="t" style="left:423.00px;top:447.61px;font-size:10.19px;line-height:9.8px;font-weight:400;color:#383a43;letter-spacing:-0.181px;">Replied</div>
<svg style="position:absolute;left:461.00px;top:447.60px" width="7" height="10" viewBox="0 0 7 10"><circle cx="3.1" cy="1.0" r="0.95" fill="#a3a6b3"/><path d="M1.1 3.3 H3.0 V6.9 Q3.0 7.7 4.7 7.7" stroke="#a3a6b3" stroke-width="1.05" fill="none"/></svg>
<div class="t" style="right:367.50px;top:447.60px;font-size:9.7px;line-height:9.7px;font-weight:400;color:#6c6e79;">0</div>
<div style="position:absolute;left:411.80px;top:462.50px;width:244.50px;height:1.00px;background:#dcdde3;"></div>
<div class="t" style="left:411.80px;top:471.91px;font-size:9.72px;line-height:9.35px;font-weight:400;color:#383a43;letter-spacing:-0.230px;">Removed</div>
<svg style="position:absolute;left:457.00px;top:471.50px" width="7" height="10" viewBox="0 0 7 10"><circle cx="3.1" cy="1.0" r="0.95" fill="#a3a6b3"/><path d="M1.1 3.3 H3.0 V6.9 Q3.0 7.7 4.7 7.7" stroke="#a3a6b3" stroke-width="1.05" fill="none"/></svg>
<div class="t" style="right:367.50px;top:471.91px;font-size:9.7px;line-height:9.7px;font-weight:400;color:#6c6e79;">0</div>
<div class="t" style="left:358.80px;top:504.90px;font-size:9.92px;line-height:9.54px;font-weight:400;color:#383a43;letter-spacing:-0.173px;">Move toxic backlinks from <span style="color:#1a7fe0">For Review</span> to the Remove list and send</div>
<div class="t" style="left:358.80px;top:517.80px;font-size:10.19px;line-height:9.8px;font-weight:400;color:#383a43;letter-spacing:-0.166px;">backlink removal requests to domain owners. Their contact info will</div>
<div class="t" style="left:692.90px;top:411.40px;font-size:10.17px;line-height:9.78px;font-weight:400;color:#383a43;letter-spacing:-0.186px;">Not exported</div>
<svg style="position:absolute;left:753.00px;top:411.10px" width="7" height="10" viewBox="0 0 7 10"><circle cx="3.1" cy="1.0" r="0.95" fill="#a3a6b3"/><path d="M1.1 3.3 H3.0 V6.9 Q3.0 7.7 4.7 7.7" stroke="#a3a6b3" stroke-width="1.05" fill="none"/></svg>
<div class="t" style="right:33.20px;top:411.41px;font-size:9.7px;line-height:9.7px;font-weight:400;color:#6c6e79;">0</div>
<div class="t" style="left:692.90px;top:429.81px;font-size:10.17px;line-height:9.78px;font-weight:400;color:#383a43;letter-spacing:-0.180px;">Exported, not confirmed</div>
<svg style="position:absolute;left:802.00px;top:429.30px" width="7" height="10" viewBox="0 0 7 10"><circle cx="3.1" cy="1.0" r="0.95" fill="#a3a6b3"/><path d="M1.1 3.3 H3.0 V6.9 Q3.0 7.7 4.7 7.7" stroke="#a3a6b3" stroke-width="1.05" fill="none"/></svg>
<div class="t" style="right:33.20px;top:429.81px;font-size:9.7px;line-height:9.7px;font-weight:400;color:#6c6e79;">0</div>
<div style="position:absolute;left:692.90px;top:444.70px;width:297.90px;height:1.00px;background:#dcdde3;"></div>
<div class="t" style="left:692.90px;top:453.82px;font-size:9.98px;line-height:9.6px;font-weight:400;color:#383a43;letter-spacing:-0.203px;">Disavowed</div>
<svg style="position:absolute;left:744.00px;top:452.70px" width="7" height="10" viewBox="0 0 7 10"><circle cx="3.1" cy="1.0" r="0.95" fill="#a3a6b3"/><path d="M1.1 3.3 H3.0 V6.9 Q3.0 7.7 4.7 7.7" stroke="#a3a6b3" stroke-width="1.05" fill="none"/></svg>
<div class="t" style="right:33.20px;top:453.60px;font-size:9.7px;line-height:9.7px;font-weight:400;color:#6c6e79;">0</div>
<div class="t" style="left:692.90px;top:504.91px;font-size:10.09px;line-height:9.7px;font-weight:400;color:#383a43;letter-spacing:-0.178px;">Request Google to ignore toxic backlinks that cannot be removed.</div>
<div class="t" style="left:692.90px;top:517.81px;font-size:10.09px;line-height:9.7px;font-weight:400;color:#383a43;letter-spacing:-0.171px;">Add them to Disavow to generate a single file and upload it to the</div>
<div style="position:absolute;left:978px;top:484.5px;width:34px;height:34px;border-radius:50%;background:#000"></div>
<svg style="position:absolute;left:985px;top:490px" width="20" height="22" viewBox="0 0 20 22"><path d="M5.8 9.6 A4.2 4.2 0 1 1 11.8 13.3 C10.6 14.0 9.9 14.5 9.9 15.5 V15.8" stroke="#fff" stroke-width="2.1" fill="none" stroke-linecap="round"/><circle cx="9.9" cy="18.3" r="1.15" fill="#fff"/></svg>
</body></html>
